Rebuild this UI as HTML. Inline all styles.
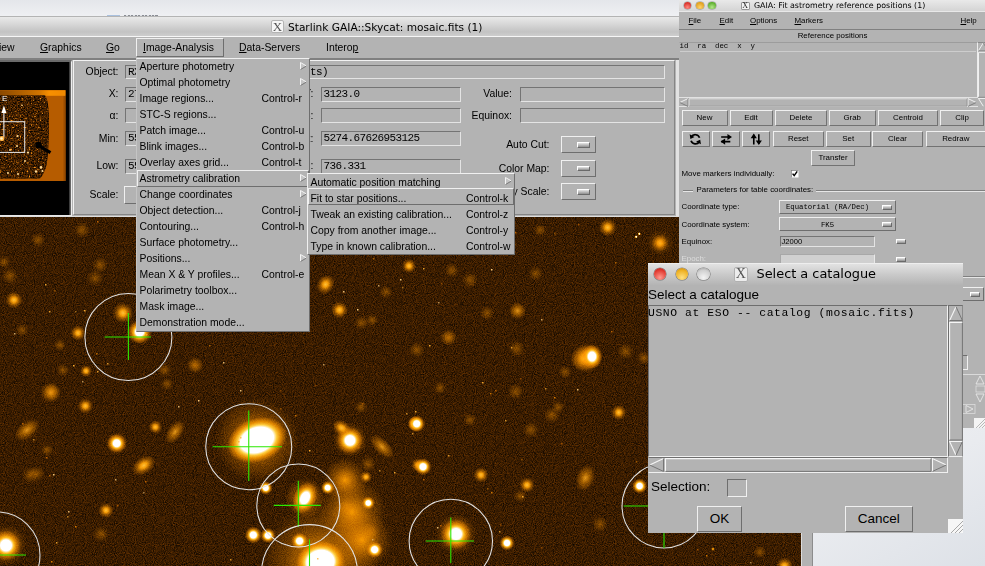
<!DOCTYPE html>
<html><head><meta charset="utf-8"><title>GAIA</title><style>
*{box-sizing:border-box;margin:0;padding:0}
html,body{width:985px;height:566px;overflow:hidden;background:#e4e7ec;font-family:"Liberation Sans",sans-serif;color:#000}
.a{position:absolute}
.g{background:#b3b3b3}
.r{border:1px solid;border-color:#f0f0f0 #6e6e6e #6e6e6e #f0f0f0}
.s{border:1px solid;border-color:#6e6e6e #f0f0f0 #f0f0f0 #6e6e6e}
.r2{border:2px solid;border-color:#e8e8e8 #777 #777 #e8e8e8}
.s2{border:2px solid;border-color:#777 #e8e8e8 #e8e8e8 #777}
.t{position:absolute;white-space:pre;font-size:10.4px;line-height:14px;height:14px;transform-origin:0 50%}
.tr{transform-origin:100% 50%;text-align:right}
.tc{transform-origin:50% 50%;text-align:center}
.m{font-family:"Liberation Mono",monospace}
.u{text-decoration:underline}
.e{position:absolute;border:1px solid;border-color:#747474 #e4e4e4 #e4e4e4 #747474;overflow:hidden;white-space:pre;font-family:"Liberation Mono",monospace;font-size:11px;letter-spacing:-.6px;line-height:13px;padding-left:2px}
.ind{position:absolute;width:13px;height:5.5px;border:1px solid;border-color:#fff #6a6a6a #6a6a6a #fff;background:linear-gradient(#e6e6e6,#909090)}
.sm{font-size:7.9px;line-height:10px;height:10px}
.b{position:absolute;border:1px solid;border-color:#f0f0f0 #6e6e6e #6e6e6e #f0f0f0;text-align:center;background:#b3b3b3}
</style></head><body>
<div class="a" style="left:0;top:0;width:985px;height:566px;background:linear-gradient(135deg,#eceef1 0%,#e8ebef 60%,#e0e4e9 100%)"></div>
<div class="a" style="left:0;top:0;width:679px;height:16px;background:linear-gradient(#e4e6ea,#eff0f3)"></div>
<div class="a" style="left:107px;top:14.5px;width:13px;height:1.5px;background:#a9c0de"></div><div class="a" style="left:124px;top:14.5px;width:34px;height:1.5px;background:repeating-linear-gradient(90deg,#8a8d94 0 2px,#dfe1e6 2px 3.5px)"></div>
<svg class="a" style="left:0;top:217px" width="801" height="349" viewBox="0 217 801 349">
<defs>
<filter id="nz" x="0" y="0" width="100%" height="100%" color-interpolation-filters="sRGB"><feTurbulence type="fractalNoise" baseFrequency="1.1" numOctaves="1" seed="3" result="n"/><feGaussianBlur in="n" stdDeviation="0.75" result="b"/>
<feColorMatrix in="b" type="matrix" values="0.62 0 0 0 -0.082  0.31 0 0 0 -0.043  0 0 0 0 0  0 0 0 0 1"/></filter>
<radialGradient id="gw"><stop offset="0" stop-color="#fff"/><stop offset=".36" stop-color="#fff"/><stop offset=".52" stop-color="#ffb21a"/><stop offset=".72" stop-color="#ff8800" stop-opacity=".55"/><stop offset="1" stop-color="#ff8000" stop-opacity="0"/></radialGradient>
<radialGradient id="gW"><stop offset="0" stop-color="#fff"/><stop offset=".56" stop-color="#fff"/><stop offset=".66" stop-color="#ffc840"/><stop offset=".8" stop-color="#ff9000" stop-opacity=".75"/><stop offset="1" stop-color="#ff8000" stop-opacity="0"/></radialGradient>
<radialGradient id="go"><stop offset="0" stop-color="#ffb838"/><stop offset=".28" stop-color="#ff9808" stop-opacity=".95"/><stop offset=".6" stop-color="#ff8800" stop-opacity=".42"/><stop offset="1" stop-color="#ff8000" stop-opacity="0"/></radialGradient>
<radialGradient id="gm"><stop offset="0" stop-color="#ffa020" stop-opacity=".85"/><stop offset=".4" stop-color="#ff8c00" stop-opacity=".5"/><stop offset="1" stop-color="#ff8000" stop-opacity="0"/></radialGradient>
<radialGradient id="gf"><stop offset="0" stop-color="#ff8800" stop-opacity=".42"/><stop offset=".45" stop-color="#ff8800" stop-opacity=".22"/><stop offset="1" stop-color="#ff8000" stop-opacity="0"/></radialGradient>
<radialGradient id="gh"><stop offset="0" stop-color="#ff9000" stop-opacity=".95"/><stop offset=".3" stop-color="#ff8800" stop-opacity=".62"/><stop offset=".6" stop-color="#ff8400" stop-opacity=".28"/><stop offset="1" stop-color="#ff8000" stop-opacity="0"/></radialGradient>
</defs>
<rect x="0" y="215" width="801" height="351" fill="#3d1d00"/>
<rect x="0" y="215" width="801" height="351" filter="url(#nz)"/>
<g style="mix-blend-mode:screen">
<circle cx="257" cy="440" r="42" fill="url(#gh)"/>
<circle cx="320.5" cy="562" r="58" fill="url(#gh)"/>
<circle cx="305" cy="498" r="20" fill="url(#gh)"/>
<circle cx="350" cy="440" r="17" fill="url(#gh)"/>
<circle cx="456" cy="534" r="20" fill="url(#gh)"/>
<circle cx="586" cy="358" r="15" fill="url(#gh)"/>
<circle cx="6" cy="545" r="20" fill="url(#gh)"/>
<circle cx="116.7" cy="443.3" r="11" fill="url(#gh)"/>
<circle cx="139.6" cy="332" r="13" fill="url(#gh)"/>
<circle cx="352" cy="512" r="34" fill="url(#gh)"/>
<circle cx="362" cy="540" r="30" fill="url(#gh)"/>
<circle cx="345" cy="480" r="22" fill="url(#gh)"/>
<circle cx="116.7" cy="443.3" r="9.5" fill="url(#gw)"/>
<circle cx="85.4" cy="406" r="7.6" fill="url(#go)"/>
<circle cx="50.8" cy="392.5" r="10.2" fill="url(#gm)"/>
<ellipse cx="27" cy="430" rx="14.4" ry="8.5" fill="url(#gm)" transform="rotate(-38 27 430)"/>
<ellipse cx="143.7" cy="465.4" rx="12.8" ry="8.5" fill="url(#go)" transform="rotate(-35 143.7 465.4)"/>
<ellipse cx="175" cy="432" rx="13.6" ry="7.6" fill="url(#gm)" transform="rotate(-55 175 432)"/>
<circle cx="155.4" cy="427" r="6.8" fill="url(#go)"/>
<circle cx="106" cy="510.4" r="7.6" fill="url(#go)"/>
<circle cx="6" cy="545.4" r="15.2" fill="url(#gw)"/>
<circle cx="36.7" cy="473.7" r="8.0" fill="url(#gf)"/>
<circle cx="101" cy="534" r="8.0" fill="url(#gf)"/>
<circle cx="78" cy="333" r="7.6" fill="url(#go)"/>
<circle cx="86" cy="371" r="6.0" fill="url(#go)"/>
<circle cx="194.6" cy="365" r="8.0" fill="url(#gf)"/>
<circle cx="63" cy="370" r="6.4" fill="url(#gf)"/>
<circle cx="164.6" cy="370" r="7.2" fill="url(#gf)"/>
<circle cx="139.6" cy="332" r="11.4" fill="url(#gw)"/>
<circle cx="123" cy="313" r="10.2" fill="url(#go)"/>
<circle cx="14" cy="300" r="8.5" fill="url(#go)"/>
<circle cx="95" cy="278" r="8.0" fill="url(#gf)"/>
<circle cx="100" cy="265" r="8.0" fill="url(#gf)"/>
<circle cx="82" cy="230" r="8.0" fill="url(#gf)"/>
<circle cx="38" cy="240" r="7.2" fill="url(#gf)"/>
<circle cx="10" cy="276" r="8.0" fill="url(#gf)"/>
<circle cx="4" cy="262" r="6.4" fill="url(#gf)"/>
<circle cx="167" cy="384" r="6.4" fill="url(#gf)"/>
<circle cx="52" cy="392" r="8.0" fill="url(#gf)"/>
<circle cx="22" cy="330" r="6.4" fill="url(#gf)"/>
<circle cx="60" cy="345" r="6.4" fill="url(#gf)"/>
<circle cx="30" cy="475" r="8.0" fill="url(#gf)"/>
<circle cx="47" cy="450" r="6.4" fill="url(#gf)"/>
<ellipse cx="257" cy="440" rx="30.6" ry="21.9" fill="url(#gW)" transform="rotate(-20 257 440)"/>
<ellipse cx="305" cy="498" rx="17.1" ry="11.4" fill="url(#gw)" transform="rotate(-65 305 498)"/>
<ellipse cx="320.5" cy="562" rx="24.5" ry="21.0" fill="url(#gW)" transform="rotate(-10 320.5 562)"/>
<circle cx="350" cy="440.4" r="13.3" fill="url(#gw)"/>
<ellipse cx="341.7" cy="428" rx="10.2" ry="7.6" fill="url(#go)" transform="rotate(35 341.7 428)"/>
<circle cx="415.4" cy="423.75" r="7.6" fill="url(#gw)"/>
<circle cx="368.3" cy="503" r="6.6" fill="url(#gw)"/>
<circle cx="253.3" cy="535" r="8.5" fill="url(#gw)"/>
<circle cx="268" cy="535.5" r="7.6" fill="url(#gw)"/>
<circle cx="299.6" cy="541" r="8.5" fill="url(#gw)"/>
<circle cx="327.7" cy="487.7" r="6.8" fill="url(#gw)"/>
<circle cx="374.6" cy="549.6" r="8.5" fill="url(#gw)"/>
<circle cx="366" cy="477" r="6.0" fill="url(#go)"/>
<circle cx="195.8" cy="365.4" r="8.0" fill="url(#gf)"/>
<circle cx="265.8" cy="488" r="6.8" fill="url(#gw)"/>
<ellipse cx="382" cy="446.7" rx="15.3" ry="7.6" fill="url(#gm)" transform="rotate(45 382 446.7)"/>
<circle cx="418" cy="465" r="6.8" fill="url(#go)"/>
<circle cx="361" cy="407" r="6.4" fill="url(#gf)"/>
<circle cx="368" cy="464" r="8.0" fill="url(#gf)"/>
<circle cx="345.8" cy="506.8" r="9.6" fill="url(#gf)"/>
<circle cx="371" cy="532" r="9.6" fill="url(#gf)"/>
<ellipse cx="586.5" cy="358" rx="16.1" ry="12.8" fill="url(#go)" transform="rotate(-15 586.5 358)"/>
<ellipse cx="592" cy="356.5" rx="10.4" ry="12.3" fill="url(#gw)" transform="rotate(0 592 356.5)"/>
<circle cx="416.7" cy="423.75" r="8.5" fill="url(#gw)"/>
<circle cx="423" cy="466.7" r="8.5" fill="url(#gw)"/>
<circle cx="456" cy="534" r="15.2" fill="url(#gw)"/>
<circle cx="507" cy="543" r="7.6" fill="url(#gw)"/>
<circle cx="481" cy="475" r="7.6" fill="url(#go)"/>
<circle cx="527" cy="485" r="7.6" fill="url(#go)"/>
<circle cx="520" cy="496" r="6.4" fill="url(#gf)"/>
<circle cx="531" cy="430" r="8.0" fill="url(#gf)"/>
<ellipse cx="585.4" cy="478" rx="13.6" ry="9.3" fill="url(#gm)" transform="rotate(-70 585.4 478)"/>
<circle cx="618.75" cy="412.5" r="7.6" fill="url(#go)"/>
<circle cx="516.7" cy="348.75" r="8.0" fill="url(#gf)"/>
<circle cx="515.8" cy="391.7" r="8.0" fill="url(#gf)"/>
<circle cx="449" cy="337.5" r="8.0" fill="url(#gf)"/>
<circle cx="416.7" cy="350" r="8.0" fill="url(#gf)"/>
<circle cx="639.6" cy="486" r="7.6" fill="url(#gw)"/>
<circle cx="600" cy="524" r="8.0" fill="url(#gf)"/>
<circle cx="552" cy="415" r="8.0" fill="url(#gf)"/>
<circle cx="558" cy="407" r="6.4" fill="url(#gf)"/>
<circle cx="625.5" cy="351.5" r="8.0" fill="url(#gf)"/>
<circle cx="644" cy="358" r="7.2" fill="url(#gf)"/>
<circle cx="565" cy="372" r="6.4" fill="url(#gf)"/>
<circle cx="470" cy="420" r="6.4" fill="url(#gf)"/>
<circle cx="440" cy="388" r="6.4" fill="url(#gf)"/>
<circle cx="607.7" cy="227.5" r="8.8" fill="url(#go)"/>
<circle cx="660" cy="243" r="8.5" fill="url(#go)"/>
<circle cx="660" cy="243" r="12.8" fill="url(#gf)"/>
<circle cx="636.2" cy="236.8" r="1.7" fill="url(#gw)"/>
<circle cx="639.3" cy="233.8" r="1.7" fill="url(#gw)"/>
<circle cx="409" cy="266" r="7.1" fill="url(#go)"/>
<ellipse cx="325.6" cy="284.4" rx="10.2" ry="8.5" fill="url(#go)" transform="rotate(-60 325.6 284.4)"/>
<circle cx="339.5" cy="310" r="8.5" fill="url(#go)"/>
<circle cx="517.5" cy="310.8" r="8.5" fill="url(#gm)"/>
<circle cx="487" cy="313" r="7.2" fill="url(#gf)"/>
<circle cx="451.7" cy="270.5" r="7.2" fill="url(#gf)"/>
<circle cx="470" cy="280" r="8.0" fill="url(#gf)"/>
<circle cx="361.4" cy="322.8" r="7.2" fill="url(#gf)"/>
<circle cx="448" cy="337.4" r="8.0" fill="url(#gf)"/>
<circle cx="535.7" cy="273.5" r="7.2" fill="url(#gf)"/>
<circle cx="386" cy="292" r="6.4" fill="url(#gf)"/>
<circle cx="540" cy="230" r="6.4" fill="url(#gf)"/>
<circle cx="372" cy="320" r="6.4" fill="url(#gf)"/>
<circle cx="713" cy="549" r="2.0" fill="url(#go)"/>
<circle cx="784.5" cy="566" r="8.5" fill="url(#go)"/>
<circle cx="760" cy="552" r="6.4" fill="url(#gf)"/>
</g>
<rect x="259" y="270" width="1.5" height="1.5" fill="#ffb030" opacity="0.54"/>
<rect x="429" y="345" width="1.5" height="1.5" fill="#ffb030" opacity="0.95"/>
<rect x="172" y="247" width="1.5" height="1.5" fill="#c86800" opacity="0.53"/>
<rect x="73" y="365" width="1.5" height="1.5" fill="#ffb030" opacity="0.97"/>
<rect x="505" y="420" width="1.5" height="1.5" fill="#ffb030" opacity="0.79"/>
<rect x="317" y="558" width="1.5" height="1.5" fill="#ffb030" opacity="0.78"/>
<rect x="107" y="363" width="1.5" height="1.5" fill="#ffb030" opacity="0.79"/>
<rect x="448" y="455" width="1.5" height="1.5" fill="#ffb030" opacity="0.79"/>
<rect x="511" y="347" width="1.5" height="1.5" fill="#ffb030" opacity="0.78"/>
<rect x="495" y="390" width="1.5" height="1.5" fill="#c86800" opacity="0.89"/>
<rect x="372" y="539" width="1.5" height="1.5" fill="#ffd080" opacity="0.65"/>
<rect x="636" y="461" width="1.5" height="1.5" fill="#e08000" opacity="0.54"/>
<rect x="240" y="390" width="1.5" height="1.5" fill="#ffd080" opacity="0.86"/>
<rect x="230" y="559" width="1.5" height="1.5" fill="#ffb030" opacity="0.76"/>
<rect x="132" y="336" width="1.5" height="1.5" fill="#c86800" opacity="0.71"/>
<rect x="770" y="244" width="1.5" height="1.5" fill="#ffd080" opacity="0.67"/>
<rect x="280" y="390" width="1.5" height="1.5" fill="#c86800" opacity="0.53"/>
<rect x="75" y="311" width="1.5" height="1.5" fill="#ffb030" opacity="0.53"/>
<rect x="561" y="443" width="1.5" height="1.5" fill="#c86800" opacity="0.64"/>
<rect x="309" y="450" width="1.5" height="1.5" fill="#ffb030" opacity="0.97"/>
<rect x="284" y="430" width="1.5" height="1.5" fill="#c86800" opacity="0.53"/>
<rect x="615" y="262" width="1.5" height="1.5" fill="#e08000" opacity="0.70"/>
<rect x="733" y="390" width="1.5" height="1.5" fill="#e08000" opacity="0.72"/>
<rect x="440" y="525" width="1.5" height="1.5" fill="#c86800" opacity="0.93"/>
<rect x="223" y="362" width="1.5" height="1.5" fill="#ffd080" opacity="0.84"/>
<rect x="304" y="298" width="1.5" height="1.5" fill="#ffb030" opacity="0.59"/>
<rect x="186" y="298" width="1.5" height="1.5" fill="#c86800" opacity="0.92"/>
<rect x="146" y="315" width="1.5" height="1.5" fill="#e08000" opacity="0.71"/>
<rect x="295" y="415" width="1.5" height="1.5" fill="#e08000" opacity="0.85"/>
<rect x="412" y="433" width="1.5" height="1.5" fill="#ffb030" opacity="0.73"/>
<rect x="697" y="549" width="1.5" height="1.5" fill="#c86800" opacity="0.70"/>
<rect x="315" y="385" width="1.5" height="1.5" fill="#c86800" opacity="0.53"/>
<rect x="54" y="290" width="1.5" height="1.5" fill="#e08000" opacity="0.55"/>
<rect x="481" y="253" width="1.5" height="1.5" fill="#e08000" opacity="0.77"/>
<rect x="759" y="431" width="1.5" height="1.5" fill="#ffb030" opacity="0.94"/>
<rect x="491" y="269" width="1.5" height="1.5" fill="#ffd080" opacity="0.98"/>
<rect x="482" y="382" width="1.5" height="1.5" fill="#ffb030" opacity="0.92"/>
<rect x="794" y="380" width="1.5" height="1.5" fill="#c86800" opacity="0.66"/>
<rect x="115" y="479" width="1.5" height="1.5" fill="#ffd080" opacity="0.74"/>
<rect x="554" y="397" width="1.5" height="1.5" fill="#e08000" opacity="0.98"/>
<rect x="423" y="268" width="1.5" height="1.5" fill="#ffb030" opacity="0.88"/>
<rect x="238" y="441" width="1.5" height="1.5" fill="#ffb030" opacity="0.85"/>
<rect x="209" y="345" width="1.5" height="1.5" fill="#e08000" opacity="0.68"/>
<rect x="178" y="406" width="1.5" height="1.5" fill="#ffd080" opacity="0.82"/>
<rect x="491" y="492" width="1.5" height="1.5" fill="#e08000" opacity="0.90"/>
<rect x="655" y="475" width="1.5" height="1.5" fill="#e08000" opacity="0.60"/>
<rect x="394" y="472" width="1.5" height="1.5" fill="#ffb030" opacity="0.90"/>
<rect x="378" y="285" width="1.5" height="1.5" fill="#ffd080" opacity="0.72"/>
<rect x="750" y="562" width="1.5" height="1.5" fill="#ffd080" opacity="0.54"/>
<rect x="82" y="381" width="1.5" height="1.5" fill="#ffd080" opacity="0.60"/>
<rect x="499" y="531" width="1.5" height="1.5" fill="#ffb030" opacity="0.74"/>
<rect x="522" y="496" width="1.5" height="1.5" fill="#ffb030" opacity="0.92"/>
<rect x="96" y="353" width="1.5" height="1.5" fill="#e08000" opacity="0.74"/>
<rect x="143" y="492" width="1.5" height="1.5" fill="#ffd080" opacity="0.54"/>
<rect x="757" y="469" width="1.5" height="1.5" fill="#c86800" opacity="0.70"/>
<rect x="757" y="470" width="1.5" height="1.5" fill="#e08000" opacity="1.00"/>
<rect x="22" y="423" width="1.5" height="1.5" fill="#c86800" opacity="0.90"/>
<rect x="117" y="505" width="1.5" height="1.5" fill="#c86800" opacity="0.83"/>
<rect x="280" y="408" width="1.5" height="1.5" fill="#e08000" opacity="0.51"/>
<rect x="639" y="471" width="1.5" height="1.5" fill="#ffb030" opacity="0.76"/>
<rect x="747" y="368" width="1.5" height="1.5" fill="#e08000" opacity="0.91"/>
<rect x="169" y="305" width="1.5" height="1.5" fill="#ffd080" opacity="0.75"/>
<rect x="611" y="331" width="1.5" height="1.5" fill="#c86800" opacity="0.92"/>
<rect x="49" y="475" width="1.5" height="1.5" fill="#c86800" opacity="0.83"/>
<rect x="652" y="397" width="1.5" height="1.5" fill="#e08000" opacity="0.77"/>
<rect x="419" y="224" width="1.5" height="1.5" fill="#c86800" opacity="0.89"/>
<rect x="487" y="488" width="1.5" height="1.5" fill="#e08000" opacity="0.59"/>
<rect x="379" y="470" width="1.5" height="1.5" fill="#ffb030" opacity="0.66"/>
<rect x="415" y="411" width="1.5" height="1.5" fill="#ffb030" opacity="0.94"/>
<rect x="45" y="284" width="1.5" height="1.5" fill="#ffb030" opacity="0.89"/>
<rect x="406" y="413" width="1.5" height="1.5" fill="#ffb030" opacity="0.72"/>
<rect x="490" y="393" width="1.5" height="1.5" fill="#e08000" opacity="0.85"/>
<rect x="362" y="403" width="1.5" height="1.5" fill="#c86800" opacity="0.75"/>
<rect x="198" y="400" width="1.5" height="1.5" fill="#ffd080" opacity="0.96"/>
<rect x="714" y="288" width="1.5" height="1.5" fill="#c86800" opacity="0.57"/>
<rect x="97" y="371" width="1.5" height="1.5" fill="#ffb030" opacity="0.84"/>
<rect x="343" y="291" width="1.5" height="1.5" fill="#ffd080" opacity="0.89"/>
<rect x="718" y="271" width="1.5" height="1.5" fill="#ffd080" opacity="0.57"/>
<rect x="706" y="555" width="1.5" height="1.5" fill="#e08000" opacity="0.87"/>
<rect x="75" y="526" width="1.5" height="1.5" fill="#e08000" opacity="0.99"/>
<rect x="666" y="273" width="1.5" height="1.5" fill="#c86800" opacity="1.00"/>
<rect x="323" y="364" width="1.5" height="1.5" fill="#ffd080" opacity="0.66"/>
<rect x="578" y="224" width="1.5" height="1.5" fill="#c86800" opacity="0.72"/>
<rect x="14" y="333" width="1.5" height="1.5" fill="#ffd080" opacity="0.76"/>
<rect x="51" y="561" width="1.5" height="1.5" fill="#e08000" opacity="0.99"/>
<rect x="84" y="310" width="1.5" height="1.5" fill="#ffb030" opacity="0.95"/>
<rect x="145" y="481" width="1.5" height="1.5" fill="#c86800" opacity="0.92"/>
<rect x="541" y="547" width="1.5" height="1.5" fill="#c86800" opacity="0.57"/>
<rect x="735" y="416" width="1.5" height="1.5" fill="#ffd080" opacity="0.54"/>
<rect x="46" y="457" width="1.5" height="1.5" fill="#c86800" opacity="0.95"/>
<rect x="215" y="223" width="1.5" height="1.5" fill="#ffb030" opacity="0.90"/>
<rect x="67" y="516" width="1.5" height="1.5" fill="#ffb030" opacity="0.63"/>
<rect x="97" y="221" width="1.5" height="1.5" fill="#c86800" opacity="0.96"/>
<rect x="214" y="262" width="1.5" height="1.5" fill="#e08000" opacity="0.97"/>
<rect x="775" y="308" width="1.5" height="1.5" fill="#e08000" opacity="0.60"/>
<rect x="250" y="323" width="1.5" height="1.5" fill="#e08000" opacity="0.64"/>
<rect x="400" y="279" width="1.5" height="1.5" fill="#ffd080" opacity="0.90"/>
<rect x="796" y="230" width="1.5" height="1.5" fill="#ffb030" opacity="0.87"/>
<rect x="441" y="283" width="1.5" height="1.5" fill="#c86800" opacity="0.62"/>
<rect x="358" y="447" width="1.5" height="1.5" fill="#c86800" opacity="0.83"/>
<rect x="437" y="527" width="1.5" height="1.5" fill="#ffd080" opacity="0.84"/>
<rect x="786" y="337" width="1.5" height="1.5" fill="#e08000" opacity="0.70"/>
<rect x="278" y="236" width="1.5" height="1.5" fill="#e08000" opacity="0.51"/>
<rect x="500" y="524" width="1.5" height="1.5" fill="#c86800" opacity="0.58"/>
<rect x="68" y="511" width="1.5" height="1.5" fill="#ffd080" opacity="0.80"/>
<rect x="554" y="233" width="1.5" height="1.5" fill="#e08000" opacity="0.58"/>
<rect x="357" y="309" width="1.5" height="1.5" fill="#ffd080" opacity="0.99"/>
<rect x="438" y="302" width="1.5" height="1.5" fill="#ffd080" opacity="0.61"/>
<rect x="146" y="334" width="1.5" height="1.5" fill="#ffb030" opacity="0.74"/>
<rect x="402" y="287" width="1.5" height="1.5" fill="#ffb030" opacity="0.55"/>
<rect x="654" y="267" width="1.5" height="1.5" fill="#ffb030" opacity="0.70"/>
<rect x="240" y="437" width="1.5" height="1.5" fill="#ffb030" opacity="0.79"/>
<rect x="423" y="479" width="1.5" height="1.5" fill="#c86800" opacity="0.88"/>
<rect x="577" y="389" width="1.5" height="1.5" fill="#ffd080" opacity="0.86"/>
<rect x="515" y="232" width="1.5" height="1.5" fill="#c86800" opacity="0.87"/>
<rect x="650" y="266" width="1.5" height="1.5" fill="#ffb030" opacity="0.91"/>
<rect x="467" y="529" width="1.5" height="1.5" fill="#e08000" opacity="0.54"/>
<rect x="33" y="439" width="1.5" height="1.5" fill="#ffb030" opacity="0.69"/>
<rect x="361" y="235" width="1.5" height="1.5" fill="#ffb030" opacity="0.81"/>
<rect x="545" y="388" width="1.5" height="1.5" fill="#ffb030" opacity="0.73"/>
<rect x="56" y="542" width="1.5" height="1.5" fill="#ffb030" opacity="0.83"/>
<rect x="53" y="474" width="1.5" height="1.5" fill="#ffd080" opacity="0.90"/>
<rect x="677" y="299" width="1.5" height="1.5" fill="#e08000" opacity="0.62"/>
<rect x="520" y="378" width="1.5" height="1.5" fill="#c86800" opacity="0.54"/>
<rect x="728" y="317" width="1.5" height="1.5" fill="#ffb030" opacity="0.81"/>
<rect x="514" y="244" width="1.5" height="1.5" fill="#e08000" opacity="0.67"/>
<rect x="521" y="459" width="1.5" height="1.5" fill="#e08000" opacity="0.51"/>
<rect x="49" y="311" width="1.5" height="1.5" fill="#ffb030" opacity="0.85"/>
<rect x="541" y="319" width="1.5" height="1.5" fill="#ffd080" opacity="0.73"/>
<rect x="373" y="258" width="1.5" height="1.5" fill="#e08000" opacity="0.66"/>
<circle cx="128.4" cy="337" r="43.5" fill="none" stroke="#e2e2e2" stroke-width="1.05"/>
<path d="M104.6 337H151M128.4 313V360" stroke="#2de800" stroke-width="1.1" fill="none"/>
<circle cx="-3" cy="555" r="43" fill="none" stroke="#e2e2e2" stroke-width="1.05"/>
<path d="M-20 555H26M-3 540V570" stroke="#2de800" stroke-width="1.1" fill="none"/>
<circle cx="248.75" cy="446.7" r="43" fill="none" stroke="#e2e2e2" stroke-width="1.05"/>
<path d="M212.5 446.7H282M248.75 410.4V481" stroke="#2de800" stroke-width="1.1" fill="none"/>
<circle cx="298.3" cy="505.4" r="41.5" fill="none" stroke="#e2e2e2" stroke-width="1.05"/>
<path d="M273.75 505.4H320.8M298.3 480.8V526.7" stroke="#2de800" stroke-width="1.1" fill="none"/>
<circle cx="309.5" cy="572.6" r="48" fill="none" stroke="#e2e2e2" stroke-width="1.05"/>
<path d="M290 572.6H330M309.5 539.6V570" stroke="#2de800" stroke-width="1.1" fill="none"/>
<circle cx="450.8" cy="541" r="41.7" fill="none" stroke="#e2e2e2" stroke-width="1.05"/>
<path d="M425.8 541H474M450.8 517.5V563" stroke="#2de800" stroke-width="1.1" fill="none"/>
<circle cx="664" cy="506" r="42" fill="none" stroke="#e2e2e2" stroke-width="1.05"/>
<path d="M623.75 506H700M664 480V548" stroke="#2de800" stroke-width="1.1" fill="none"/>
</svg>
<div class="a g" style="left:800.5px;top:217px;width:12.3px;height:349px;border-left:1.3px solid #dcdcdc;border-right:.8px solid #8c8c8c"></div>
<div class="a" style="left:812.8px;top:428px;width:172.2px;height:138px;background:linear-gradient(150deg,#eff1f3 0%,#e9ebef 45%,#dde1e7 100%)"></div>
<div class="a" style="left:0;top:16px;width:679px;height:20.5px;background:linear-gradient(#e9e9e9 0%,#d6d6d6 40%,#c3c3c3 78%,#cdcdcd 100%);border-top:1px solid #b4b4b4;border-bottom:1px solid #f2f2f2"></div>
<div class="a" style="left:271px;top:20px;width:13px;height:13px;background:#f6f6f6;border:1px solid #b4b4b4;border-radius:2px;font-family:'Liberation Serif',serif;font-size:13px;line-height:11px;text-align:center;color:#555">X</div>
<div class="a" style="left:288px;top:18.6px;height:16px;line-height:16px;font-family:'DejaVu Sans',sans-serif;font-size:10.6px;white-space:pre;color:#000">Starlink GAIA::Skycat: mosaic.fits (1)</div>
<div class="a g" style="left:0px;top:36px;width:679px;height:24px;border-top:1px solid #f6f6f6;border-bottom:2.6px solid #808080"></div>
<div class="t" style="left:-1px;top:40.6px;">iew</div>
<div class="t" style="left:40px;top:40.6px;"><span class="u">G</span>raphics</div>
<div class="t" style="left:106px;top:40.6px;"><span class="u">G</span>o</div>
<div class="a g r" style="left:135.5px;top:37.5px;width:88.5px;height:19px;"></div>
<div class="t" style="left:143px;top:40.6px;"><span class="u">I</span>mage-Analysis</div>
<div class="t" style="left:239px;top:40.6px;"><span class="u">D</span>ata-Servers</div>
<div class="t" style="left:326px;top:40.6px;">Intero<span class="u">p</span></div>
<div class="a g" style="left:0px;top:60px;width:679px;height:157.2px;"></div>
<div class="a " style="left:0px;top:59.8px;width:72px;height:157px;background:#000;border-top:2.4px solid #6a6a6a;border-right:1.6px solid #ececec;border-bottom:2px solid #e6e6e6;box-shadow:inset -1.6px 0 0 #666"></div>
<svg class="a" style="left:0;top:61px" width="70" height="152" viewBox="0 61 70 152">
<defs><filter id="nz2" x="0" y="0" width="100%" height="100%" color-interpolation-filters="sRGB"><feTurbulence type="fractalNoise" baseFrequency="0.7" numOctaves="2" seed="11" result="n"/>
<feColorMatrix in="n" type="matrix" values="0.95 0 0 0 -0.235  0.47 0 0 0 -0.12  0 0 0 0 0  0 0 0 0 1"/><feComposite in2="SourceGraphic" operator="in"/></filter>
<filter id="nz3" x="0" y="0" width="100%" height="100%" color-interpolation-filters="sRGB"><feTurbulence type="fractalNoise" baseFrequency="0.55" numOctaves="1" seed="5" result="n"/>
<feColorMatrix in="n" type="matrix" values="0 0 0 0 1  0 0 0 0 .6  0 0 0 0 .1  0 7 0 0 -4.45"/><feComposite in2="SourceGraphic" operator="in"/></filter>
<linearGradient id="pg" x1="0" x2="1" y1="0" y2="0"><stop offset="0" stop-color="#8a4800"/><stop offset=".6" stop-color="#d07400"/><stop offset=".75" stop-color="#f89000"/><stop offset="1" stop-color="#f08800"/></linearGradient></defs>
<rect x="0" y="90" width="65.5" height="91" fill="#b65c00"/>
<rect x="63.5" y="96" width="2" height="85" fill="#9a4c00"/>
<rect x="0" y="90.3" width="65.5" height="5.5" fill="url(#pg)"/>
<path id="pf" d="M0 95.5H45Q48 100 48.5 110Q49.5 125 48.5 140Q48 156 46.5 165Q44 174 40 178.5H0Z" fill="#3a1c00"/>
<path d="M0 95.5H45Q48 100 48.5 110Q49.5 125 48.5 140Q48 156 46.5 165Q44 174 40 178.5H0Z" filter="url(#nz2)"/>
<path d="M0 95.5H45Q48 100 48.5 110Q49.5 125 48.5 140Q48 156 46.5 165Q44 174 40 178.5H0Z" filter="url(#nz3)"/>
<g fill="#ffd890"><circle cx="17.6" cy="136" r="1.1"/><circle cx="17" cy="146" r="1"/><circle cx="28" cy="152.6" r="1.1"/><circle cx="41" cy="167.4" r="1.3"/><circle cx="36" cy="171.5" r="1.2"/><circle cx="42.4" cy="171" r="1"/><circle cx="18" cy="174" r="1"/><circle cx="22" cy="105.3" r=".8"/><circle cx="10" cy="150" r=".9"/><circle cx="25" cy="161" r=".9"/><circle cx="8" cy="173" r="1"/></g>
<circle cx="38.5" cy="145" r="3.3" fill="#000"/><path d="M38.5 145.5L50.5 152.7" stroke="#000" stroke-width="3.2"/>
<rect x="-1" y="121.7" width="25.7" height="30.7" fill="none" stroke="#e8e8e8" stroke-width="1"/>
<path d="M3.9 137.5V110" stroke="#fff" stroke-width="1"/><path d="M3.9 105.5L1.4 113H6.4Z" fill="#fff"/>
<circle cx="1.8" cy="138.5" r="2.6" fill="#ffb040"/><circle cx="1.5" cy="138.5" r="1.3" fill="#fff0c0"/>
<text x="2" y="101" font-family="Liberation Sans, sans-serif" font-size="8" fill="#fff">E</text>
</svg>
<div class="a g" style="left:73.3px;top:60.2px;width:601.8px;height:155.3px;border:solid;border-width:1.9px 1.4px 1.4px 1.9px;border-color:#f2f2f2 #858585 #858585 #f2f2f2"></div>
<div class="t tr" style="right:866.5px;top:65.3px;">Object:</div>
<div class="t tr" style="right:866.5px;top:87.4px;">X:</div>
<div class="t tr" style="right:866.5px;top:109.2px;">α:</div>
<div class="t tr" style="right:866.5px;top:132.29999999999998px;">Min:</div>
<div class="t tr" style="right:866.5px;top:159.39999999999998px;">Low:</div>
<div class="t tr" style="right:866.5px;top:187.89999999999998px;">Scale:</div>
<div class="e" style="left:125px;top:65px;width:540px;height:14px;line-height:12px">RXJ1347-1145 (mosaic.fi</div>
<div class="e" style="left:125px;top:87px;width:90px;height:15px">2730.0</div>
<div class="e" style="left:125px;top:108px;width:90px;height:15px"></div>
<div class="e" style="left:125px;top:131px;width:90px;height:15px">5527.0</div>
<div class="e" style="left:125px;top:159px;width:90px;height:15px">5527.0</div>
<div class="a g r" style="left:123.5px;top:185.5px;width:40px;height:18px;"></div>
<div class="a m" style="left:310px;top:66px;font-size:11px;letter-spacing:-.6px;line-height:13px;white-space:pre">ts)</div>
<div class="t tr" style="right:671.5px;top:87.4px;">Y:</div>
<div class="t tr" style="right:671.5px;top:109.2px;">δ:</div>
<div class="t tr" style="right:671.5px;top:132.29999999999998px;">Max:</div>
<div class="t tr" style="right:671.5px;top:159.39999999999998px;">High:</div>
<div class="e" style="left:320.5px;top:87px;width:140px;height:15px">3123.0</div>
<div class="e" style="left:320.5px;top:108px;width:140px;height:15px"></div>
<div class="e" style="left:320.5px;top:131px;width:140px;height:15px">5274.67626953125</div>
<div class="e" style="left:320.5px;top:159px;width:140px;height:15px">736.331</div>
<div class="t tr" style="right:473px;top:87.2px;">Value:</div>
<div class="t tr" style="right:473px;top:109.0px;">Equinox:</div>
<div class="e" style="left:519.5px;top:87px;width:145.5px;height:15px"></div>
<div class="e" style="left:519.5px;top:108px;width:145.5px;height:15px"></div>
<div class="t tr" style="right:435.5px;top:138.2px;">Auto Cut:</div>
<div class="t tr" style="right:435.5px;top:161.89999999999998px;">Color Map:</div>
<div class="t tr" style="right:435.5px;top:185.2px;">Intensity Scale:</div>
<div class="a g r" style="left:561px;top:136px;width:35px;height:17px;"></div>
<div class="ind" style="left:577px;top:142px"></div>
<div class="a g r" style="left:561px;top:159.5px;width:35px;height:17px;"></div>
<div class="ind" style="left:577px;top:165.5px"></div>
<div class="a g r" style="left:561px;top:183px;width:35px;height:17px;"></div>
<div class="ind" style="left:577px;top:189px"></div>
<div class="a " style="left:676.1px;top:60px;width:2.7px;height:157px;background:#e2e2e2"></div>
<div class="a " style="left:0px;top:215.7px;width:679px;height:1.3px;background:#dedede"></div>
<div class="a g r" style="left:135.5px;top:57.5px;width:174px;height:274px;border-left-color:#c4c4c4"></div>
<div class="t" style="left:139.5px;top:60.2px;">Aperture photometry</div>
<svg class="a" style="left:299.5px;top:61.5px" width="7" height="8" viewBox="0 0 7 8"><path d="M.5 .5L6.5 4L.5 7.5Z" fill="#c4c4c4" stroke="none"/><path d="M.5 7.5V.5L6.5 4" fill="none" stroke="#f4f4f4" stroke-width="1"/><path d="M6.5 4L.5 7.5" fill="none" stroke="#777" stroke-width="1"/></svg>
<div class="t" style="left:139.5px;top:76.2px;">Optimal photometry</div>
<svg class="a" style="left:299.5px;top:77.5px" width="7" height="8" viewBox="0 0 7 8"><path d="M.5 .5L6.5 4L.5 7.5Z" fill="#c4c4c4" stroke="none"/><path d="M.5 7.5V.5L6.5 4" fill="none" stroke="#f4f4f4" stroke-width="1"/><path d="M6.5 4L.5 7.5" fill="none" stroke="#777" stroke-width="1"/></svg>
<div class="t" style="left:139.5px;top:92.2px;">Image regions...</div>
<div class="t" style="left:261.5px;top:92.2px;">Control-r</div>
<div class="t" style="left:139.5px;top:108.2px;">STC-S regions...</div>
<div class="t" style="left:139.5px;top:124.2px;">Patch image...</div>
<div class="t" style="left:261.5px;top:124.2px;">Control-u</div>
<div class="t" style="left:139.5px;top:140.2px;">Blink images...</div>
<div class="t" style="left:261.5px;top:140.2px;">Control-b</div>
<div class="t" style="left:139.5px;top:156.2px;">Overlay axes grid...</div>
<div class="t" style="left:261.5px;top:156.2px;">Control-t</div>
<div class="a g r" style="left:136.5px;top:169.5px;width:172px;height:17px;"></div>
<div class="t" style="left:139.5px;top:172.2px;">Astrometry calibration</div>
<svg class="a" style="left:299.5px;top:173.5px" width="7" height="8" viewBox="0 0 7 8"><path d="M.5 .5L6.5 4L.5 7.5Z" fill="#c4c4c4" stroke="none"/><path d="M.5 7.5V.5L6.5 4" fill="none" stroke="#f4f4f4" stroke-width="1"/><path d="M6.5 4L.5 7.5" fill="none" stroke="#777" stroke-width="1"/></svg>
<div class="t" style="left:139.5px;top:188.2px;">Change coordinates</div>
<svg class="a" style="left:299.5px;top:189.5px" width="7" height="8" viewBox="0 0 7 8"><path d="M.5 .5L6.5 4L.5 7.5Z" fill="#c4c4c4" stroke="none"/><path d="M.5 7.5V.5L6.5 4" fill="none" stroke="#f4f4f4" stroke-width="1"/><path d="M6.5 4L.5 7.5" fill="none" stroke="#777" stroke-width="1"/></svg>
<div class="t" style="left:139.5px;top:204.2px;">Object detection...</div>
<div class="t" style="left:261.5px;top:204.2px;">Control-j</div>
<div class="t" style="left:139.5px;top:220.2px;">Contouring...</div>
<div class="t" style="left:261.5px;top:220.2px;">Control-h</div>
<div class="t" style="left:139.5px;top:236.2px;">Surface photometry...</div>
<div class="t" style="left:139.5px;top:252.2px;">Positions...</div>
<svg class="a" style="left:299.5px;top:253.5px" width="7" height="8" viewBox="0 0 7 8"><path d="M.5 .5L6.5 4L.5 7.5Z" fill="#c4c4c4" stroke="none"/><path d="M.5 7.5V.5L6.5 4" fill="none" stroke="#f4f4f4" stroke-width="1"/><path d="M6.5 4L.5 7.5" fill="none" stroke="#777" stroke-width="1"/></svg>
<div class="t" style="left:139.5px;top:268.2px;">Mean X &amp; Y profiles...</div>
<div class="t" style="left:261.5px;top:268.2px;">Control-e</div>
<div class="t" style="left:139.5px;top:284.2px;">Polarimetry toolbox...</div>
<div class="t" style="left:139.5px;top:300.2px;">Mask image...</div>
<div class="t" style="left:139.5px;top:316.2px;">Demonstration mode...</div>
<div class="a g r" style="left:307px;top:172.5px;width:208px;height:82px;"></div>
<div class="t" style="left:310.5px;top:175.6px;">Automatic position matching</div>
<svg class="a" style="left:505px;top:176.9px" width="7" height="8" viewBox="0 0 7 8"><path d="M.5 .5L6.5 4L.5 7.5Z" fill="#c4c4c4" stroke="none"/><path d="M.5 7.5V.5L6.5 4" fill="none" stroke="#f4f4f4" stroke-width="1"/><path d="M6.5 4L.5 7.5" fill="none" stroke="#777" stroke-width="1"/></svg>
<div class="a g r" style="left:308px;top:188.4px;width:206px;height:17px;"></div>
<div class="t" style="left:310.5px;top:191.6px;">Fit to star positions...</div>
<div class="t" style="left:466px;top:191.6px;">Control-k</div>
<div class="t" style="left:310.5px;top:207.6px;">Tweak an existing calibration...</div>
<div class="t" style="left:466px;top:207.6px;">Control-z</div>
<div class="t" style="left:310.5px;top:223.6px;">Copy from another image...</div>
<div class="t" style="left:466px;top:223.6px;">Control-y</div>
<div class="t" style="left:310.5px;top:239.6px;">Type in known calibration...</div>
<div class="t" style="left:466px;top:239.6px;">Control-w</div>
<div class="a g" style="left:679px;top:0px;width:306px;height:428px;"></div>
<div class="a" style="left:679px;top:0;width:306px;height:11px;background:linear-gradient(#e9e9e9,#d4d4d4)"></div>
<div class="a" style="left:683.8000000000001px;top:1.6px;width:7.6px;height:7.6px;border-radius:50%;background:radial-gradient(circle at 50% 75%,#ff8a80,#d8322a 70%);box-shadow:0 0 0 .5px rgba(0,0,0,.35)"></div>
<div class="a" style="left:696.0px;top:1.6px;width:7.6px;height:7.6px;border-radius:50%;background:radial-gradient(circle at 50% 75%,#ffd36a,#e0a020 70%);box-shadow:0 0 0 .5px rgba(0,0,0,.35)"></div>
<div class="a" style="left:708.4000000000001px;top:1.6px;width:7.6px;height:7.6px;border-radius:50%;background:radial-gradient(circle at 50% 75%,#b4e88a,#5fb030 70%);box-shadow:0 0 0 .5px rgba(0,0,0,.35)"></div>
<div class="a" style="left:741px;top:1.5px;width:8.5px;height:8.5px;background:#f4f4f4;border:1px solid #999;border-radius:1px;font-family:'Liberation Serif',serif;font-size:8px;line-height:6.5px;text-align:center;color:#222">X</div>
<div class="a" style="left:754px;top:0;height:11px;line-height:11px;font-family:'DejaVu Sans',sans-serif;font-size:7.9px;white-space:pre;color:#000">GAIA: Fit astrometry reference positions (1)</div>
<div class="a g" style="left:679px;top:11px;width:306px;height:18.5px;border-top:1px solid #e8e8e8;border-bottom:1px solid #808080"></div>
<div class="t sm" style="left:688.5px;top:16px;"><span class="u">F</span>ile</div>
<div class="t sm" style="left:719.5px;top:16px;"><span class="u">E</span>dit</div>
<div class="t sm" style="left:750px;top:16px;"><span class="u">O</span>ptions</div>
<div class="t sm" style="left:794.5px;top:16px;"><span class="u">M</span>arkers</div>
<div class="t sm" style="left:960.5px;top:16px;"><span class="u">H</span>elp</div>
<div class="t sm tc" style="left:732.5px;width:200px;top:30.5px;">Reference positions</div>
<div class="a g" style="left:679px;top:41.5px;width:298.7px;height:56px;border:1px solid;border-color:#9c9c9c #ececec #e4e4e4 #b3b3b3;border-right-width:1.2px"></div>
<div class="a m" style="left:679.5px;top:41.5px;font-size:7.4px;line-height:9px;white-space:pre">id  ra  dec  x  y</div>
<div class="a " style="left:680px;top:51px;width:296px;height:1.3px;background:#cdcdcd"></div>
<div class="a g" style="left:977.8px;top:41.5px;width:7.2px;height:65px;border-top:1px solid #8a8a8a"></div>
<svg class="a" style="left:978px;top:41.5px" width="7" height="65" viewBox="0 0 7 65"><path d="M5.3 .8L10.5 8.8H.3Z" fill="#b3b3b3"/><path d="M.4 8.8L5.3 .9" stroke="#f2f2f2" stroke-width="1" fill="none"/><path d="M5.3 .9L10 8.8H.4" stroke="#808080" stroke-width=".8" fill="none"/><path d="M.5 55V10.3H8" stroke="#f0f0f0" stroke-width="1" fill="none"/><path d="M.4 56.3H10.5L5.3 64.3Z" fill="#b3b3b3"/><path d="M5.3 64.2L.4 56.4H8" stroke="#f2f2f2" stroke-width="1" fill="none"/><path d="M.4 55.3H8" stroke="#808080" stroke-width=".8" fill="none"/></svg>
<div class="a g" style="left:679px;top:97px;width:298.5px;height:9.5px;border-top:1px solid #e2e2e2;border-bottom:1px solid #e2e2e2"></div>
<svg class="a" style="left:679px;top:97.5px" width="298" height="9" viewBox="0 0 298 9"><path d="M.8 4.5L9 .6V8.4Z" fill="#b3b3b3"/><path d="M9 .6L.8 4.5" stroke="#f0f0f0" stroke-width="1" fill="none"/><path d="M.8 4.5L9 8.4V.6" stroke="#7a7a7a" stroke-width=".9" fill="none"/><path d="M297.2 4.5L289 .6V8.4Z" fill="#b3b3b3"/><path d="M289 8.4V.6L297.2 4.5" stroke="#f0f0f0" stroke-width="1" fill="none"/><path d="M297.2 4.5L289 8.4" stroke="#7a7a7a" stroke-width=".9" fill="none"/><path d="M10 8.2V.8H288" fill="none" stroke="#e8e8e8" stroke-width=".9"/><path d="M288 .8V8.2H10" fill="none" stroke="#8a8a8a" stroke-width=".7"/></svg>
<div class="a g" style="left:681.5px;top:110.4px;width:46px;height:15.2px;border:1.4px solid;border-color:#f0f0f0 #727272 #727272 #f0f0f0"></div>
<div class="t sm tc" style="left:604.5px;width:200px;top:113.0px;">New</div>
<div class="a g" style="left:729.5px;top:110.4px;width:43px;height:15.2px;border:1.4px solid;border-color:#f0f0f0 #727272 #727272 #f0f0f0"></div>
<div class="t sm tc" style="left:651.0px;width:200px;top:113.0px;">Edit</div>
<div class="a g" style="left:775.0px;top:110.4px;width:52.0px;height:15.2px;border:1.4px solid;border-color:#f0f0f0 #727272 #727272 #f0f0f0"></div>
<div class="t sm tc" style="left:701.0px;width:200px;top:113.0px;">Delete</div>
<div class="a g" style="left:828.5px;top:110.4px;width:47.5px;height:15.2px;border:1.4px solid;border-color:#f0f0f0 #727272 #727272 #f0f0f0"></div>
<div class="t sm tc" style="left:752.25px;width:200px;top:113.0px;">Grab</div>
<div class="a g" style="left:878.0px;top:110.4px;width:60.0px;height:15.2px;border:1.4px solid;border-color:#f0f0f0 #727272 #727272 #f0f0f0"></div>
<div class="t sm tc" style="left:808.0px;width:200px;top:113.0px;">Centroid</div>
<div class="a g" style="left:940.0px;top:110.4px;width:44.0px;height:15.2px;border:1.4px solid;border-color:#f0f0f0 #727272 #727272 #f0f0f0"></div>
<div class="t sm tc" style="left:862.0px;width:200px;top:113.0px;">Clip</div>
<div class="a g" style="left:681.5px;top:130.9px;width:28.5px;height:16.2px;border:1.4px solid;border-color:#f0f0f0 #727272 #727272 #f0f0f0"></div>
<div class="a g" style="left:712.0px;top:130.9px;width:28.0px;height:16.2px;border:1.4px solid;border-color:#f0f0f0 #727272 #727272 #f0f0f0"></div>
<div class="a g" style="left:742.0px;top:130.9px;width:28.0px;height:16.2px;border:1.4px solid;border-color:#f0f0f0 #727272 #727272 #f0f0f0"></div>
<div class="a g" style="left:772.5px;top:130.9px;width:51.5px;height:16.2px;border:1.4px solid;border-color:#f0f0f0 #727272 #727272 #f0f0f0"></div>
<div class="t sm tc" style="left:698.25px;width:200px;top:134.0px;">Reset</div>
<div class="a g" style="left:826.0px;top:130.9px;width:44.5px;height:16.2px;border:1.4px solid;border-color:#f0f0f0 #727272 #727272 #f0f0f0"></div>
<div class="t sm tc" style="left:748.25px;width:200px;top:134.0px;">Set</div>
<div class="a g" style="left:872.0px;top:130.9px;width:51.0px;height:16.2px;border:1.4px solid;border-color:#f0f0f0 #727272 #727272 #f0f0f0"></div>
<div class="t sm tc" style="left:797.5px;width:200px;top:134.0px;">Clear</div>
<div class="a g" style="left:926.0px;top:130.9px;width:59.5px;height:16.2px;border:1.4px solid;border-color:#f0f0f0 #727272 #727272 #f0f0f0"></div>
<div class="t sm tc" style="left:855.75px;width:200px;top:134.0px;">Redraw</div>
<svg class="a" style="left:689.3px;top:132.7px" width="12.6" height="12.6" viewBox="0 0 11 11"><path d="M9.2 4.2A4 4 0 0 0 2 3.4M1.8 6.8A4 4 0 0 0 9 7.6" fill="none" stroke="#000" stroke-width="1.5"/><path d="M.6 1.2L1.2 5.2L4.8 3.6Z M10.4 9.8L9.8 5.8L6.2 7.4Z" fill="#000"/></svg>
<svg class="a" style="left:719.5px;top:132.7px" width="12.6" height="12.6" viewBox="0 0 11 11"><path d="M1 3.5H9M1 7.5H9" stroke="#000" stroke-width="1.4"/><path d="M6.5 .8L10.5 3.5L6.5 6.2Z M4.5 4.8L.5 7.5L4.5 10.2Z" fill="#000"/></svg>
<svg class="a" style="left:749.6px;top:132.7px" width="12.6" height="12.6" viewBox="0 0 11 11"><path d="M3.3 1.5V10M7.7 1V9.5" stroke="#000" stroke-width="1.4"/><path d="M.6 4.5L3.3 .5L6 4.5Z M5 6.5L7.7 10.5L10.4 6.5Z" fill="#000"/></svg>
<div class="a g" style="left:811.0px;top:150.0px;width:44.0px;height:15.799999999999994px;border:1.4px solid;border-color:#f0f0f0 #727272 #727272 #f0f0f0"></div>
<div class="t sm tc" style="left:733.0px;width:200px;top:152.89999999999998px;">Transfer</div>
<div class="t sm" style="left:681.5px;top:168.5px;">Move markers individually:</div>
<svg class="a" style="left:791px;top:170px" width="7.5" height="7.5" viewBox="0 0 7.5 7.5"><rect x="0" y="0" width="7.5" height="7.5" fill="#fff"/><path d="M0 7.5V0H7.5" fill="none" stroke="#777" stroke-width="1.4"/><path d="M1.6 3.6L3.2 5.6L6.2 1.4" fill="none" stroke="#000" stroke-width="1.5"/></svg>
<div class="a " style="left:682.5px;top:189.5px;width:10px;height:2px;border-top:1px solid #808080;border-bottom:1px solid #e6e6e6"></div>
<div class="a " style="left:815.5px;top:189.5px;width:170px;height:2px;border-top:1px solid #808080;border-bottom:1px solid #e6e6e6"></div>
<div class="t sm" style="left:696.5px;top:185px;">Parameters for table coordinates:</div>
<div class="t sm" style="left:681.5px;top:202px;">Coordinate type:</div>
<div class="t sm" style="left:681.5px;top:219.5px;">Coordinate system:</div>
<div class="t sm" style="left:681.5px;top:236.5px;">Equinox:</div>
<div class="t sm" style="left:681.5px;top:254px;color:#dcdcdc">Epoch:</div>
<div class="a g r" style="left:778.5px;top:200.2px;width:117px;height:14.2px;"></div>
<div class="a g r" style="left:778.5px;top:217.3px;width:117px;height:14.2px;"></div>
<div class="a m" style="left:778.5px;top:203px;width:98px;text-align:center;font-size:7.3px;line-height:9px;white-space:pre">Equatorial (RA/Dec)</div>
<div class="a m" style="left:778.5px;top:220.5px;width:98px;text-align:center;font-size:7.3px;line-height:9px;white-space:pre">FK5</div>
<div class="ind" style="left:882px;top:204.5px;width:10px;height:5px"></div>
<div class="ind" style="left:882px;top:222px;width:10px;height:5px"></div>
<div class="ind" style="left:896px;top:238.5px;width:10px;height:5px"></div>
<div class="ind" style="left:896px;top:256.5px;width:10px;height:5px"></div>
<div class="e" style="left:779.5px;top:236px;width:95.5px;height:11px;font-family:'Liberation Sans',sans-serif;font-size:7.6px;line-height:9px;letter-spacing:0;padding-left:1px">J2000</div>
<div class="e" style="left:779.5px;top:253.5px;width:95.5px;height:11px;background:#d0d0d0;border-color:#a8a8a8 #e8e8e8 #e8e8e8 #a8a8a8"></div>
<div class="a " style="left:962.5px;top:276px;width:23px;height:2px;border-top:1px solid #808080;border-bottom:1px solid #e6e6e6"></div>
<div class="a g r" style="left:955px;top:286.5px;width:28.5px;height:14px;"></div>
<div class="ind" style="left:969.7px;top:291.5px;width:10px;height:5px"></div>
<div class="a g s" style="left:960px;top:355px;width:7.5px;height:15px;"></div>
<div class="a g" style="left:962.5px;top:374px;width:23px;height:30px;border-top:1px solid #dadada"></div>
<svg class="a" style="left:975px;top:375px" width="10" height="28" viewBox="0 0 10 28"><path d="M5 1L9 9H1Z M5 27L9 19H1Z" fill="#b3b3b3" stroke="#e8e8e8" stroke-width=".9"/><rect x="1" y="11" width="9" height="6" fill="#b3b3b3" stroke="#ddd" stroke-width=".8"/></svg>
<svg class="a" style="left:962px;top:404px" width="14" height="10" viewBox="0 0 14 10"><rect x="0" y=".5" width="13" height="9" fill="#b3b3b3" stroke="#ddd" stroke-width=".8"/><path d="M4 1.5L11 5L4 8.5Z" fill="#b3b3b3" stroke="#e8e8e8" stroke-width=".9"/></svg>
<svg class="a" style="left:974px;top:418px" width="11" height="10" viewBox="0 0 11 10"><path d="M0 0H11V10H0Z" fill="#f4f4f4"/><path d="M2 10L11 1M5 10L11 4M8 10L11 7" stroke="#aaa" stroke-width=".8"/></svg>
<div class="a g" style="left:648px;top:263px;width:314.5px;height:270px;"></div>
<div class="a" style="left:648px;top:263px;width:314.5px;height:22.5px;background:linear-gradient(#e2e2e2,#cbcbcb 45%,#b2b2b2);border-top:1px solid #eee"></div>
<div class="a" style="left:653.7px;top:267.5px;width:12.6px;height:12.6px;border-radius:50%;background:radial-gradient(circle at 50% 80%,#ff9a90,#e23a30 65%,#a81c18 100%);box-shadow:0 0 0 .6px rgba(0,0,0,.4)"></div>
<div class="a" style="left:675.7px;top:267.5px;width:12.6px;height:12.6px;border-radius:50%;background:radial-gradient(circle at 50% 80%,#ffe080,#eeb020 65%,#b07810 100%);box-shadow:0 0 0 .6px rgba(0,0,0,.4)"></div>
<div class="a" style="left:697.3000000000001px;top:267.5px;width:12.6px;height:12.6px;border-radius:50%;background:radial-gradient(circle at 50% 80%,#f4f4f4,#cfcfcf 65%,#8a8a8a 100%);box-shadow:0 0 0 .6px rgba(0,0,0,.4)"></div>
<div class="a" style="left:733.5px;top:267px;width:14.5px;height:14.5px;background:#ececec;border:1px solid #b0b0b0;border-radius:2px;font-family:'Liberation Serif',serif;font-size:14px;line-height:12px;text-align:center;color:#555">X</div>
<div class="a" style="left:756.5px;top:264px;height:20px;line-height:20px;font-family:'DejaVu Sans',sans-serif;font-size:12.9px;white-space:pre;color:#000">Select a catalogue</div>
<div class="a" style="left:648px;top:287px;height:16px;line-height:16px;font-size:13.5px;white-space:pre">Select a catalogue</div>
<div class="a g s" style="left:648px;top:304.5px;width:300px;height:152px;"></div>
<div class="a m" style="left:648px;top:306.3px;height:15px;line-height:15px;font-size:11.4px;letter-spacing:.58px;white-space:pre">USNO at ESO -- catalog (mosaic.fits)</div>
<div class="a g" style="left:947.5px;top:304.5px;width:15.2px;height:152px;border:1px solid;border-color:#6e6e6e #8a8a8a #f0f0f0 #6e6e6e"></div>
<svg class="a" style="left:948.5px;top:305.5px" width="14" height="150" viewBox="0 0 14 150"><path d="M7 .5L13.5 14.5H.5Z" fill="#b3b3b3"/><path d="M.6 14.5L7 .7" stroke="#f6f6f6" stroke-width="1.1" fill="none"/><path d="M7 .7L13.4 14.5H.6" stroke="#767676" stroke-width="1" fill="none"/><rect x=".5" y="16" width="13" height="118" fill="#b3b3b3"/><path d="M.6 134V16.5H13.5" stroke="#f6f6f6" stroke-width="1.1" fill="none"/><path d="M13.4 16.5V134H.6" stroke="#767676" stroke-width="1" fill="none"/><path d="M.5 135.5H13.5L7 149.5Z" fill="#b3b3b3"/><path d="M7 149.3L.6 135.5H13.4" stroke="#f6f6f6" stroke-width="1.1" fill="none"/><path d="M13.4 135.5L7 149.3" stroke="#767676" stroke-width="1" fill="none"/></svg>
<div class="a g" style="left:648px;top:457px;width:299.5px;height:15.5px;border:1px solid;border-color:#6e6e6e #f0f0f0 #f0f0f0 #b3b3b3"></div>
<svg class="a" style="left:648.5px;top:458px" width="298" height="14" viewBox="0 0 298 14"><path d="M.5 7L14.5 .5V13.5Z" fill="#b3b3b3"/><path d="M.7 7L14.5 .6" stroke="#f6f6f6" stroke-width="1.1" fill="none"/><path d="M14.5 .6V13.4L.7 7" stroke="#767676" stroke-width="1" fill="none"/><rect x="16" y=".5" width="266" height="13" fill="#b3b3b3"/><path d="M16.5 13.4V.6H282" stroke="#f6f6f6" stroke-width="1.1" fill="none"/><path d="M282 .6V13.4H16.5" stroke="#767676" stroke-width="1" fill="none"/><path d="M297.5 7L283.5 .5V13.5Z" fill="#b3b3b3"/><path d="M283.5 13.4V.6L297.3 7" stroke="#f6f6f6" stroke-width="1.1" fill="none"/><path d="M297.3 7L283.5 13.4" stroke="#767676" stroke-width="1" fill="none"/></svg>
<div class="a" style="left:651px;top:479px;height:16px;line-height:16px;font-size:13.5px;white-space:pre">Selection:</div>
<div class="a g s" style="left:727px;top:479px;width:20px;height:18px;"></div>
<div class="a g r" style="left:697px;top:505.5px;width:45px;height:26px;font-size:13.5px;line-height:24px;text-align:center">OK</div>
<div class="a g r" style="left:844.5px;top:505.5px;width:68.5px;height:26px;font-size:13.5px;line-height:24px;text-align:center">Cancel</div>
<svg class="a" style="left:947.5px;top:518.5px" width="15" height="14" viewBox="0 0 15 14"><path d="M0 0H15V14H0Z" fill="#f6f6f6"/><path d="M3 14L15 2M7 14L15 6M11 14L15 10" stroke="#a8a8a8" stroke-width="1"/></svg>
</body></html>
